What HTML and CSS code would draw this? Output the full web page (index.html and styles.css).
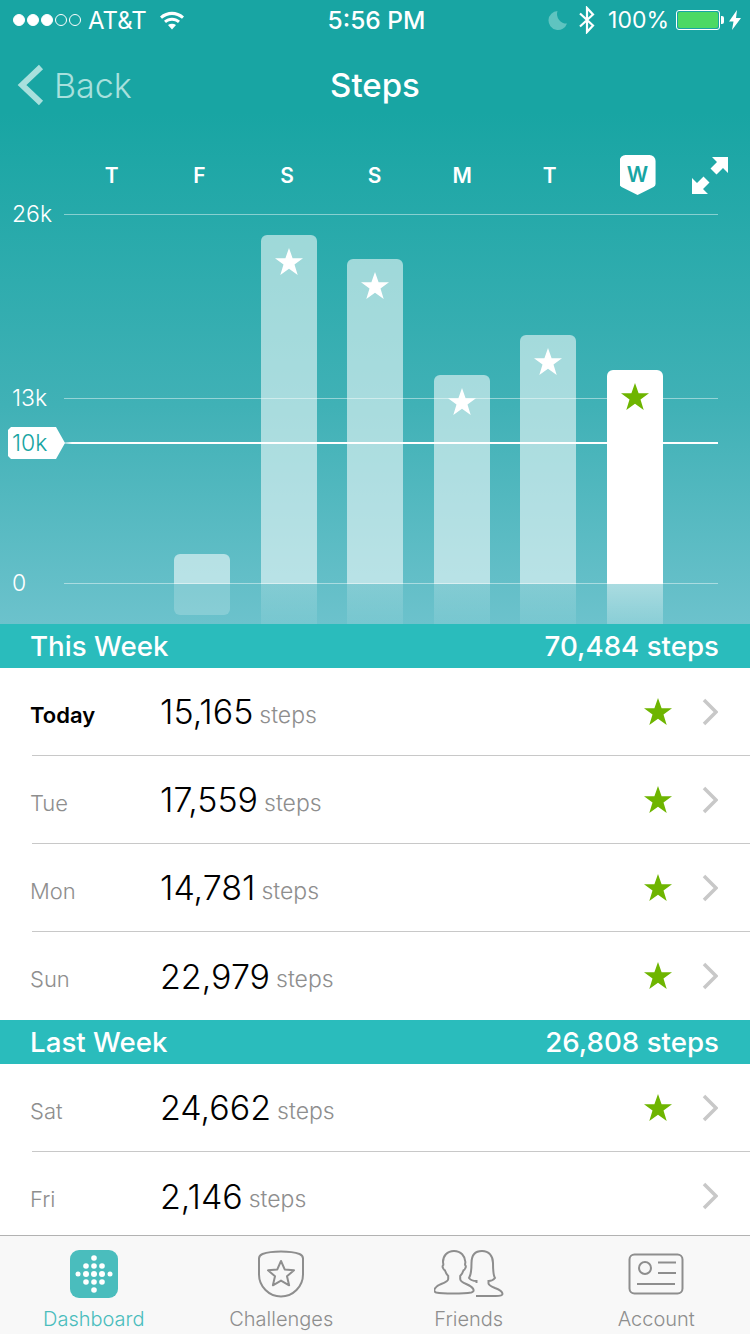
FILE: index.html
```html
<!DOCTYPE html>
<html lang="en">
<head>
  <meta charset="utf-8">
  <title>Steps</title>
  <link rel="stylesheet" href="styles.css">
</head>
<body>
  <div id="app">
    <!-- Chart panel with status bar and nav -->
    <div class="panel">
      <div class="status">
        <div class="status-left">
          <span class="signal"><i class="on"></i><i class="on"></i><i class="on"></i><i></i><i></i></span>
          <span class="carrier">AT&amp;T</span>
          <svg class="wifi" width="26" height="20" viewBox="0 0 26 20"><path d="M1 6.500C8 .3 18 .3 25 6.500l-2 2.200C17 3.600 9 3.600 3 8.700z" fill="#fff"/><path d="M5 10.800c4.800-4 11.200-4 16 0l-2 2.200c-3.700-2.900-8.300-2.900-12 0z" fill="#fff"/><path d="M9 15c2.500-1.800 5.500-1.800 8 0l-4 4.500z" fill="#fff"/></svg>
        </div>
        <div class="status-time">5:56 PM</div>
        <div class="status-right">
          <svg class="moon" width="20" height="20" viewBox="0 0 20 20"><path d="M9.500 1a9.500 9.500 0 1 0 9.500 12.500A9.500 9.500 0 0 1 9.500 1z" fill="#5fc4c0"/></svg>
          <svg class="bt" width="18" height="28" viewBox="0 0 18 28"><path d="M2 7.500 15 19.500 9 26V2l6 6.500L2 20.500" fill="none" stroke="#fff" stroke-width="2.200"/></svg>
          <span class="pct">100%</span>
          <span class="battery"><span class="battery-fill"></span></span>
          <svg class="bolt" width="12" height="20" viewBox="0 0 12 20"><path d="M8 0 0 11.500h4.500L3 20l9-12H7z" fill="#fff"/></svg>
        </div>
      </div>

      <div class="nav">
        <div class="back">
          <svg width="28" height="44" viewBox="0 0 28 44"><path d="M25 4 6 22l19 18" fill="none" stroke="#a8e0dd" stroke-width="6"/></svg>
          <span>Back</span>
        </div>
        <div class="nav-title">Steps</div>
      </div>

      <div class="days">
        <span class="day">T</span>
        <span class="day">F</span>
        <span class="day">S</span>
        <span class="day">S</span>
        <span class="day">M</span>
        <span class="day">T</span>
        <span class="day day-now">W</span>
        <svg class="expand" width="38" height="38" viewBox="0 0 38 38"><path d="M37 0H21l5 5-6.500 6.500 6 6L32 11l5 5zM1 37h16l-5-5 6.500-6.500-6-6L6 26l-5-5z" fill="#fff"/></svg>
      </div>

      <div class="chart">
        <div class="grid-line g26"><span>26k</span></div>
        <div class="grid-line g13"><span>13k</span></div>
        <div class="grid-line g0"><span>0</span></div>
        <div class="goal-line"><span class="goal-tag">10k</span></div>

        <div class="bars">
          <div class="col"></div>
          <div class="col">
            <div class="bar" style="height:30px"></div>
            <div class="reflect"><div class="reflect-short"></div></div>
          </div>
          <div class="col">
            <div class="bar" style="height:349px"><svg class="star" viewBox="0 0 30 30"><path d="M15 1l3.600 10.200H29l-8.500 6.400 3.200 10.400L15 21.800 6.300 28l3.200-10.400L1 11.200h10.400z"/></svg></div>
            <div class="reflect"><div class="reflect-full"></div></div>
          </div>
          <div class="col">
            <div class="bar" style="height:325px"><svg class="star" viewBox="0 0 30 30"><path d="M15 1l3.600 10.200H29l-8.500 6.400 3.200 10.400L15 21.800 6.300 28l3.200-10.400L1 11.200h10.400z"/></svg></div>
            <div class="reflect"><div class="reflect-full"></div></div>
          </div>
          <div class="col">
            <div class="bar" style="height:209px"><svg class="star" viewBox="0 0 30 30"><path d="M15 1l3.600 10.200H29l-8.500 6.400 3.200 10.400L15 21.800 6.300 28l3.200-10.400L1 11.200h10.400z"/></svg></div>
            <div class="reflect"><div class="reflect-full"></div></div>
          </div>
          <div class="col">
            <div class="bar" style="height:249px"><svg class="star" viewBox="0 0 30 30"><path d="M15 1l3.600 10.200H29l-8.500 6.400 3.200 10.400L15 21.800 6.300 28l3.200-10.400L1 11.200h10.400z"/></svg></div>
            <div class="reflect"><div class="reflect-full"></div></div>
          </div>
          <div class="col col-now">
            <div class="bar" style="height:214px"><svg class="star" viewBox="0 0 30 30"><path d="M15 1l3.600 10.200H29l-8.500 6.400 3.200 10.400L15 21.800 6.300 28l3.200-10.400L1 11.200h10.400z"/></svg></div>
            <div class="reflect"><div class="reflect-full"></div></div>
          </div>
        </div>
      </div>
    </div>

    <!-- Lists -->
    <div class="content">
      <div class="week-head"><span class="week-name">This Week</span><span class="week-total">70,484 steps</span></div>
      <div class="row row-today">
        <span class="row-day">Today</span><span class="row-num">15,165</span><span class="row-unit">steps</span>
        <svg class="row-star" viewBox="0 0 30 30"><path d="M15 1l3.600 10.200H29l-8.500 6.400 3.200 10.400L15 21.800 6.300 28l3.200-10.400L1 11.200h10.400z"/></svg>
        <svg class="chev" viewBox="0 0 16 28"><path d="M2 2l12 12L2 26" /></svg>
      </div>
      <div class="row">
        <span class="row-day">Tue</span><span class="row-num">17,559</span><span class="row-unit">steps</span>
        <svg class="row-star" viewBox="0 0 30 30"><path d="M15 1l3.600 10.200H29l-8.500 6.400 3.200 10.400L15 21.800 6.300 28l3.200-10.400L1 11.200h10.400z"/></svg>
        <svg class="chev" viewBox="0 0 16 28"><path d="M2 2l12 12L2 26" /></svg>
      </div>
      <div class="row">
        <span class="row-day">Mon</span><span class="row-num">14,781</span><span class="row-unit">steps</span>
        <svg class="row-star" viewBox="0 0 30 30"><path d="M15 1l3.600 10.200H29l-8.500 6.400 3.200 10.400L15 21.800 6.300 28l3.200-10.400L1 11.200h10.400z"/></svg>
        <svg class="chev" viewBox="0 0 16 28"><path d="M2 2l12 12L2 26" /></svg>
      </div>
      <div class="row row-last">
        <span class="row-day">Sun</span><span class="row-num">22,979</span><span class="row-unit">steps</span>
        <svg class="row-star" viewBox="0 0 30 30"><path d="M15 1l3.600 10.200H29l-8.500 6.400 3.200 10.400L15 21.800 6.300 28l3.200-10.400L1 11.200h10.400z"/></svg>
        <svg class="chev" viewBox="0 0 16 28"><path d="M2 2l12 12L2 26" /></svg>
      </div>
      <div class="week-head"><span class="week-name">Last Week</span><span class="week-total">26,808 steps</span></div>
      <div class="row">
        <span class="row-day">Sat</span><span class="row-num">24,662</span><span class="row-unit">steps</span>
        <svg class="row-star" viewBox="0 0 30 30"><path d="M15 1l3.600 10.200H29l-8.500 6.400 3.200 10.400L15 21.800 6.300 28l3.200-10.400L1 11.200h10.400z"/></svg>
        <svg class="chev" viewBox="0 0 16 28"><path d="M2 2l12 12L2 26" /></svg>
      </div>
      <div class="row row-last">
        <span class="row-day">Fri</span><span class="row-num">2,146</span><span class="row-unit">steps</span>
        <svg class="chev" viewBox="0 0 16 28"><path d="M2 2l12 12L2 26" /></svg>
      </div>
    </div>

    <!-- Tab bar -->
    <div class="tabs">
      <div class="tab tab-active">
        <svg width="48" height="48" viewBox="0 0 48 48"><rect width="48" height="48" rx="9" fill="#4abdbd"/><g fill="#fff"><circle cx="24" cy="8" r="2.800"/><circle cx="16" cy="16" r="2.800"/><circle cx="24" cy="16" r="2.800"/><circle cx="32" cy="16" r="2.800"/><circle cx="8" cy="24" r="2.500"/><circle cx="16" cy="24" r="3"/><circle cx="24" cy="24" r="3"/><circle cx="32" cy="24" r="3"/><circle cx="40" cy="24" r="2.500"/><circle cx="16" cy="32" r="2.800"/><circle cx="24" cy="32" r="2.800"/><circle cx="32" cy="32" r="2.800"/><circle cx="24" cy="40" r="2.800"/></g></svg>
        <span>Dashboard</span>
      </div>
      <div class="tab">
        <svg width="48" height="48" viewBox="0 0 48 48" fill="none" stroke="#8e8e8e" stroke-width="2"><path d="M24 1.500c7 0 13 .5 18.500 2.500 2 .8 3.500 2.500 3.500 4.500v16C46 36.500 36 46.500 24 46.500S2 36.500 2 24.500v-16C2 6.500 3.500 4.800 5.500 4 11 2 17 1.500 24 1.500z"/><path d="M24 11l3.700 8.400 9.300.9-7 6 2.100 9L24 30.600l-8.100 4.700 2.100-9-7-6 9.300-.9z" stroke-linejoin="round"/></svg>
        <span>Challenges</span>
      </div>
      <div class="tab">
        <svg width="70" height="48" viewBox="0 0 70 48" fill="none" stroke="#8e8e8e" stroke-width="2"><path d="M20 1C13 1 9 6 9 12c0 1 .5 2 .3 3-.6.5-.8 2-.3 3 .5 1.500 1 2 2 2.500.6 2 1.700 4 3.200 5.500v3c0 2-3 3.500-7 5-4 1.500-6 3-7 6 0 1 .5 2 2 2.500 4 .8 9 1 17 1s14-.3 18-1c2-.5 3-1.500 2-3.500-1-2-3.500-3.500-7-5-3.500-1.500-6-3-6-5v-3c1.500-1.500 2.600-3.500 3.200-5.500 1-.5 1.500-1 2-2.500.5-1 .3-2.500-.3-3-.2-1 .3-2 .3-3C31 6 27 1 20 1z"/><path d="M42.500 33v-2c-3 0-6-1-7.500-3 2-3 2.500-8 2.500-15C37.500 5 41 1 48 1s11 5 11 12c0 7 0 12 2 15-1.500 2-4 3-6.500 3v2.500c0 1.500 3 3 6.500 4.500 4 1.500 7.500 3.500 7.500 6 0 1.500-3 2-7 2H42"/></svg>
        <span>Friends</span>
      </div>
      <div class="tab tab-account">
        <svg width="56" height="42" viewBox="0 0 56 42" fill="none" stroke="#8e8e8e" stroke-width="2"><rect x="1.500" y="1.500" width="53" height="39" rx="5"/><circle cx="17" cy="15" r="6"/><path d="M30 9.500h18M30 20h18M9 31h38"/></svg>
        <span>Account</span>
      </div>
    </div>
  </div>
</body>
</html>
```

FILE: styles.css
```css
* {
  box-sizing: border-box;
}
body {
  margin: 0;
  font-family: 'Inter', 'Lato', sans-serif;
  background: #fff;
}
#app {
  width: 750px;
  height: 1334px;
  display: flex;
  flex-direction: column;
  overflow: hidden;
}
.panel {
  height: 624px;
  flex: none;
  background: linear-gradient(180deg, #18a5a3 0%, #18a5a3 18%, #40b1b6 65%, #6cc2cc 100%);
  color: #fff;
}

/* status bar */
.status {
  height: 40px;
  display: flex;
  align-items: center;
  justify-content: space-between;
  padding: 0 9px 0 13px;
  position: relative;
  font-size: 24px;
  font-weight: 400;
}
.status-left, .status-right {
  display: flex;
  align-items: center;
}
.signal {
  display: flex;
  gap: 2px;
  margin-right: 7px;
}
.signal i {
  width: 12px;
  height: 12px;
  border-radius: 50%;
  border: 1px solid #fff;
}
.signal i.on {
  background: #fff;
}
.wifi {
  margin-left: 12px;
}
.status-time {
  position: absolute;
  left: 3px;
  right: 0;
  text-align: center;
  font-weight: 500;
  font-size: 24.500px;
}
.status-right .moon {
  margin-right: 10px;
}
.status-right .pct {
  margin: 0 7px 0 12px;
  font-size: 23px;
}
.battery {
  width: 44px;
  height: 20px;
  border: 1px solid #fff;
  border-radius: 3px;
  padding: 1px;
  position: relative;
  margin-right: 9px;
}
.battery::after {
  content: "";
  position: absolute;
  right: -5px;
  top: 5px;
  width: 3px;
  height: 8px;
  background: #fff;
  border-radius: 0 2px 2px 0;
}
.battery-fill {
  display: block;
  height: 100%;
  background: #4cd964;
  border-radius: 2px;
}

/* nav */
.nav {
  height: 90px;
  display: flex;
  align-items: center;
  justify-content: center;
  position: relative;
}
.back {
  position: absolute;
  left: 16px;
  display: flex;
  align-items: center;
  gap: 10px;
  color: #a8e0dd;
  font-size: 34px;
  font-weight: 300;
}
.nav-title {
  font-size: 33px;
  font-weight: 500;
}

/* chart */
.days {
  height: 84px;
  position: relative;
  display: flex;
  align-items: center;
  padding-left: 68px;
  padding-top: 6px;
}
.day {
  width: 87.600px;
  text-align: center;
  font-size: 21px;
  font-weight: 600;
}
.day-now {
  width: 36px;
  height: 40px;
  margin-left: 26px;
  background: #fff;
  color: #18a5a3;
  clip-path: path('M6 0H30a6 6 0 0 1 6 6V29q0 2-2 3L18 40 2 32q-2-1-2-3V6a6 6 0 0 1 6-6z');
  line-height: 40px;
}
.expand {
  position: absolute;
  left: 691px;
  top: 27px;
}
.chart {
  position: relative;
  height: 410px;
}
.grid-line {
  position: absolute;
  left: 64px;
  width: 654px;
  height: 1px;
  background: rgba(255, 255, 255, 0.45);
}
.grid-line span {
  position: absolute;
  left: -52px;
  top: -13px;
  font-size: 23px;
  line-height: 26px;
  font-weight: 300;
}
.g26 { top: 0; }
.g13 { top: 184px; }
.g0 { top: 369px; }
.goal-line {
  position: absolute;
  left: 64px;
  width: 654px;
  top: 228px;
  height: 2px;
  background: linear-gradient(90deg, rgba(255, 255, 255, 0.3), #fff 8px);
  z-index: 2;
}
.goal-tag {
  position: absolute;
  left: -56px;
  top: -15px;
  width: 57px;
  height: 32px;
  padding-left: 4px;
  background: #fff;
  color: #18a5a3;
  font-size: 23px;
  line-height: 32px;
  font-weight: 300;
  clip-path: polygon(0 3px, 3px 0, 48px 0, 57px 16px, 48px 32px, 3px 32px, 0 29px);
}
.bars {
  position: absolute;
  left: 87.500px;
  top: 0;
  bottom: 0;
  display: flex;
  gap: 30.600px;
}
.col {
  width: 56px;
  display: flex;
  flex-direction: column;
  justify-content: flex-end;
}
.bar {
  background: rgba(255, 255, 255, 0.55);
  border-radius: 6px 6px 0 0;
  display: flex;
  justify-content: center;
  padding-top: 12px;
}
.reflect {
  height: 40px;
}
.reflect-full {
  height: 40px;
  background: linear-gradient(180deg, rgba(255, 255, 255, 0.2), rgba(255, 255, 255, 0.08));
}
.reflect-short {
  height: 31px;
  background: rgba(255, 255, 255, 0.2);
  border-radius: 0 0 6px 6px;
}
.col-now .bar {
  background: #fff;
}
.col-now .reflect-full {
  background: linear-gradient(180deg, rgba(255, 255, 255, 0.45), rgba(255, 255, 255, 0.2));
}
.star {
  width: 30px;
  height: 30px;
  fill: #fff;
}
.col-now .star {
  fill: #6eb500;
}

/* list */
.content {
  flex: 1;
  overflow: hidden;
}
.week-head {
  height: 44px;
  background: #2abcbc;
  color: #fff;
  display: flex;
  align-items: center;
  justify-content: space-between;
  padding: 0 31px 0 30px;
  font-size: 27.700px;
  font-weight: 500;
}
.row {
  height: 88px;
  display: flex;
  align-items: center;
  margin-left: 32px;
  padding-right: 32px;
  border-bottom: 1px solid #c8c8c8;
}
.row-last {
  border-bottom: none;
}
.row-day {
  width: 130px;
  margin-left: -2px;
  margin-top: 6px;
  font-size: 22px;
  color: #8e8e8e;
  font-weight: 300;
}
.row-today .row-day {
  color: #000;
  font-weight: 600;
}
.row-num {
  font-size: 34px;
  font-weight: 300;
  color: #000;
}
.row-unit {
  margin-left: 6px;
  margin-top: 6px;
  font-size: 23px;
  font-weight: 300;
  color: #8e8e8e;
}
.row-star {
  width: 30px;
  height: 30px;
  fill: #6eb500;
  margin-left: auto;
  margin-right: 29px;
}
.chev {
  width: 16px;
  height: 28px;
  fill: none;
  stroke: #c8c8c8;
  stroke-width: 3.500;
}
.row-last .chev:first-of-type {
  margin-left: auto;
}

/* tabs */
.tabs {
  height: 99px;
  flex: none;
  display: flex;
  background: #f8f8f8;
  border-top: 1px solid #b2b2b2;
}
.tab {
  flex: 1;
  display: flex;
  flex-direction: column;
  align-items: center;
  justify-content: space-between;
  padding: 14px 0 3px;
  font-size: 20px;
  font-weight: 300;
  color: #8e8e8e;
}
.tab-account {
  padding-top: 17px;
}
.tab-active {
  color: #4abdbd;
}
```
